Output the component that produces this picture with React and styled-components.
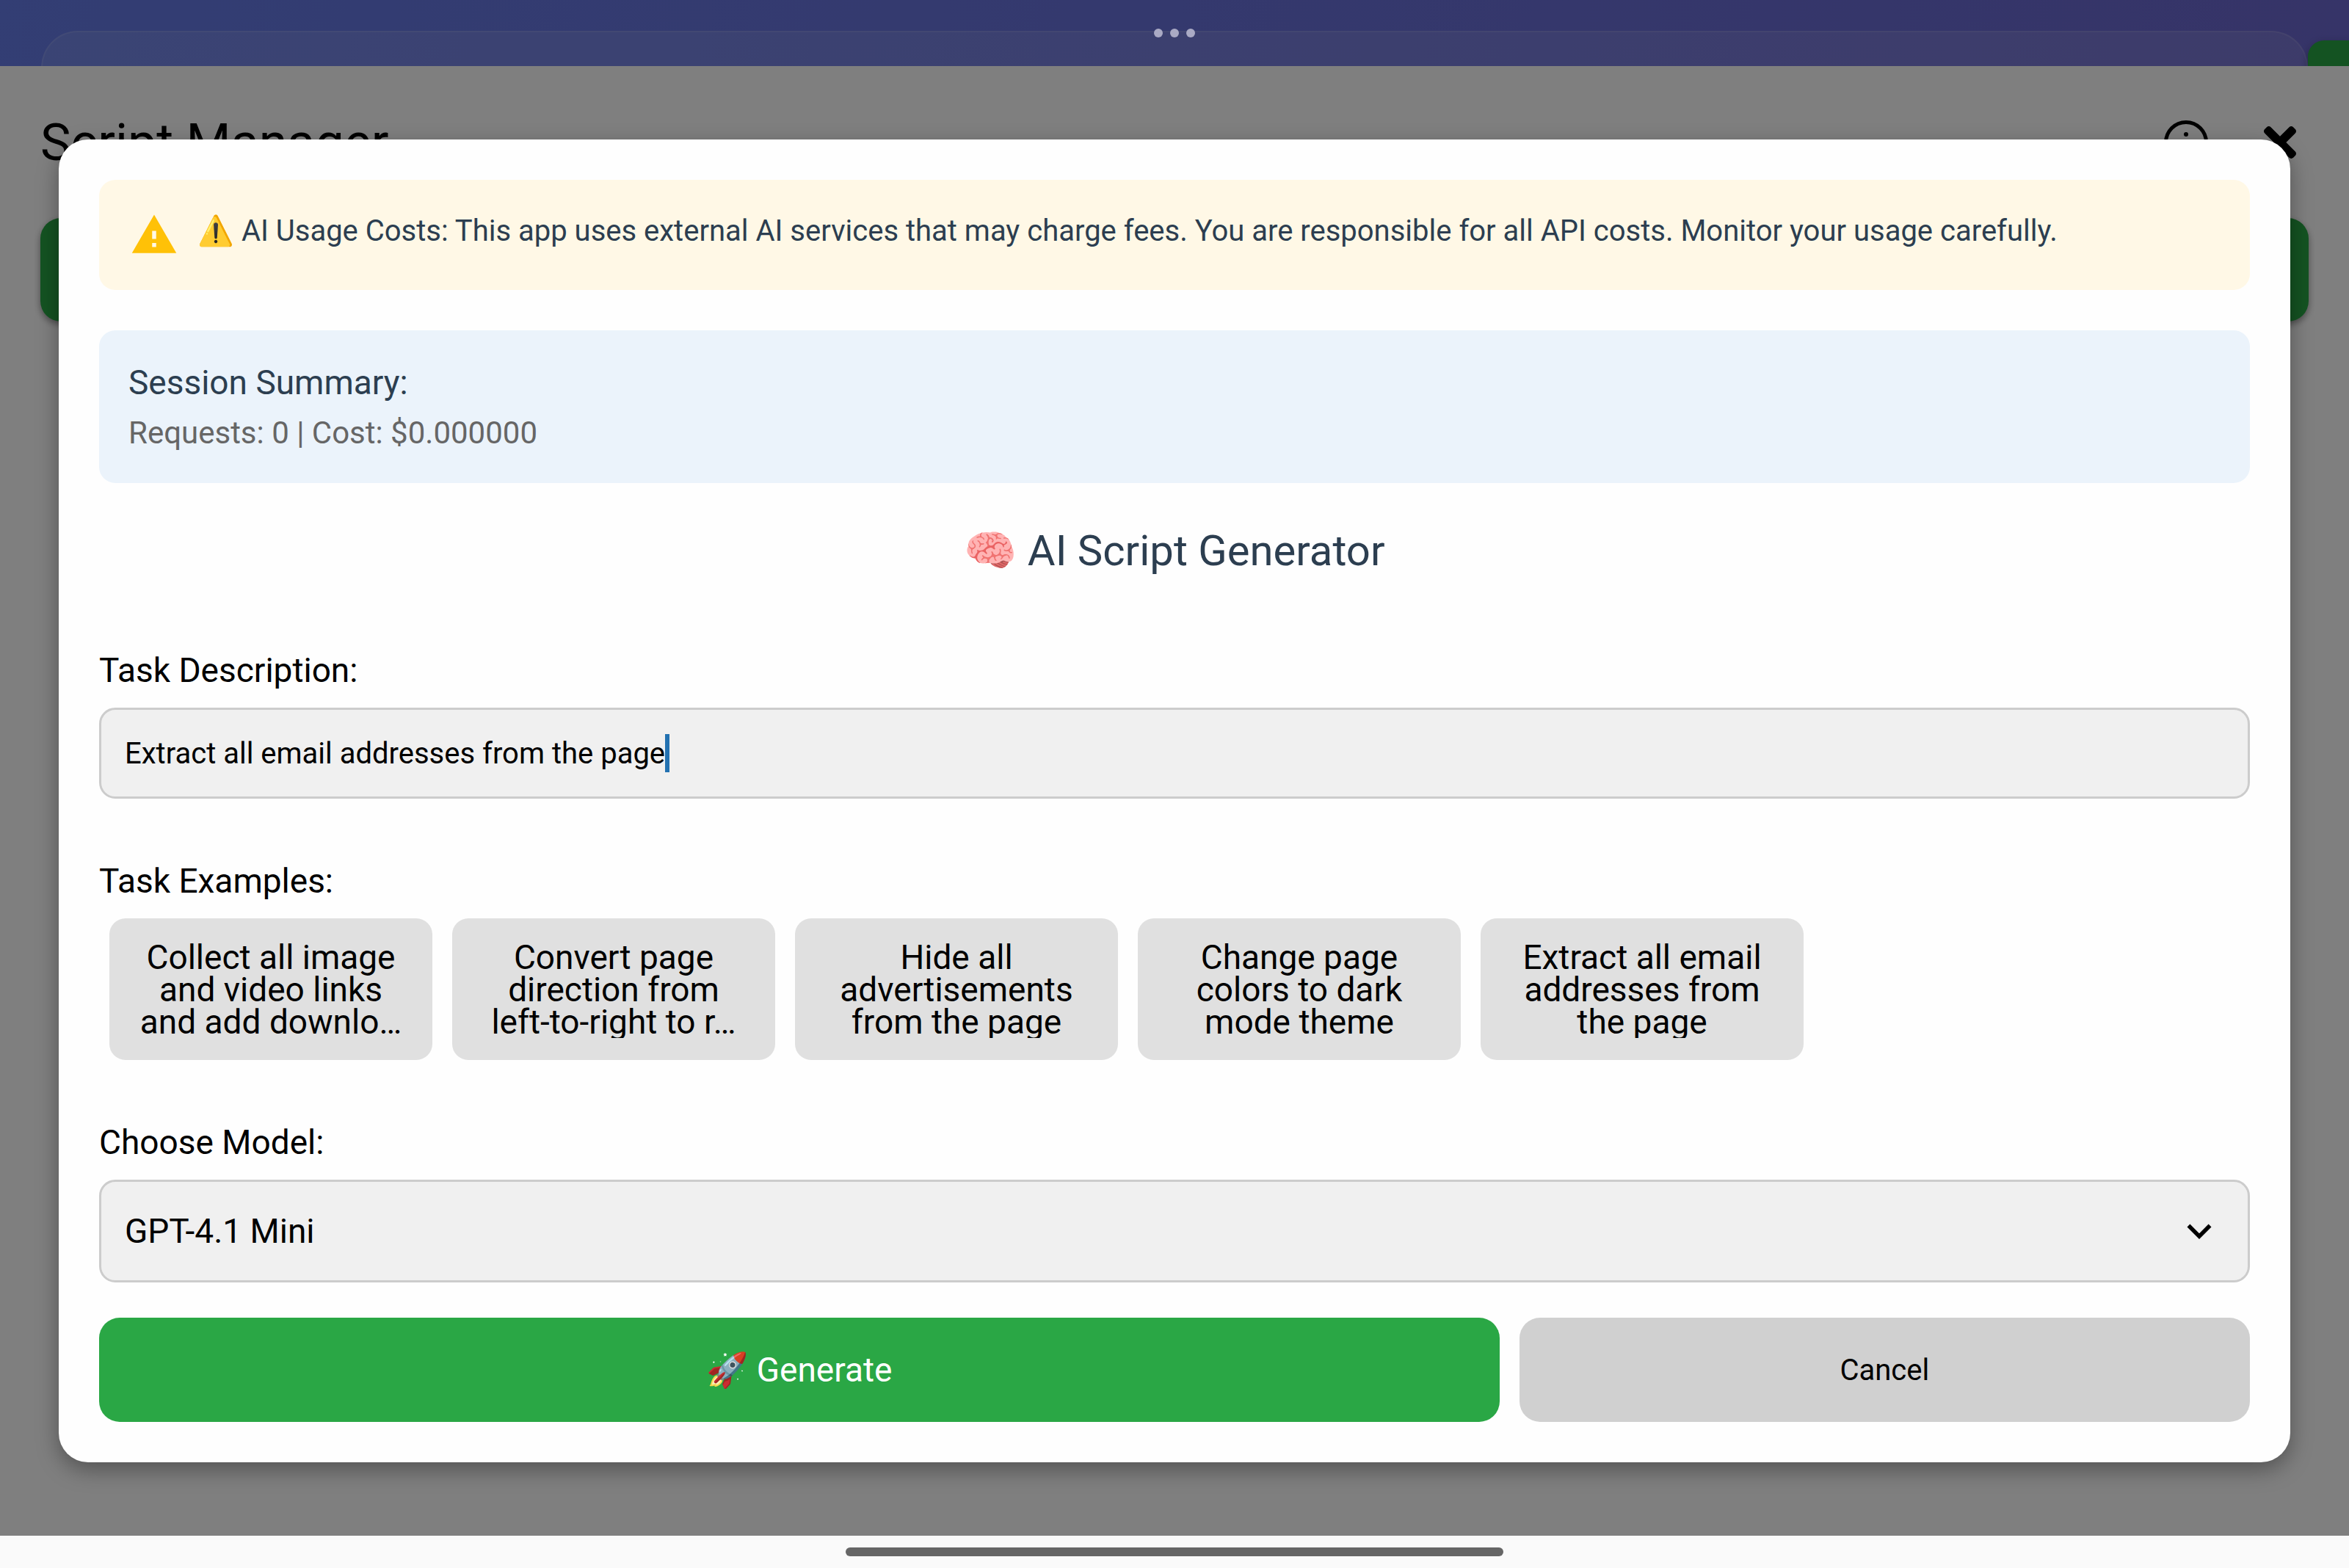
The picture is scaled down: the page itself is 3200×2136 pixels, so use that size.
import React, { useState } from "react";
import styled, { createGlobalStyle } from "styled-components";
import { FaTimes } from "react-icons/fa";

const GlobalStyle = createGlobalStyle`
  *, *::before, *::after { box-sizing: border-box; }
  body { margin: 0; background: #fafafa; font-family: Roboto, "Noto Sans", sans-serif; color: #000; }
  button, input, select { font: inherit; color: inherit; margin: 0; border: 0; outline: 0; }
  h1, h2, p { margin: 0; font-weight: 400; }
`;

const Screen = styled.div`
  display: flex;
  flex-direction: column;
  min-height: 100vh;
`;

const Stage = styled.div`
  position: relative;
  display: flex;
  flex-direction: column;
  flex: 1;
  overflow: hidden;
`;

const TopBar = styled.header`
  display: flex;
  align-items: flex-start;
  height: 90px;
  padding: 42px 0 0 56px;
  overflow: hidden;
  background: linear-gradient(100deg, #667ce8, #6c68d0);
`;

const TopCard = styled.div`
  flex: 1;
  height: 120px;
  border: 2px solid rgba(255, 255, 255, 0.1);
  border-radius: 50px;
  background: rgba(255, 255, 255, 0.1);
`;

const TopAction = styled.div`
  width: 56px;
  height: 120px;
  margin-top: 13px;
  border-radius: 22px 0 0 22px;
  background: #28a745;
  box-shadow: 0 4px 12px rgba(0, 0, 0, 0.3);
`;

const ManagerPage = styled.main`
  display: flex;
  flex-direction: column;
  flex: 1;
  gap: 54px;
  padding: 55px 55px 0;
  background: #fff;
`;

const ManagerHeader = styled.div`
  display: flex;
  align-items: center;
  gap: 54px;
  height: 98px;
  padding-right: 2px;
`;

const ManagerTitle = styled.h1`
  flex: 1;
  font-size: 70px;
  line-height: 80px;
`;

const IconButton = styled.button`
  display: grid;
  place-items: center;
  width: 74px;
  height: 74px;
  padding: 0;
  background: none;
  font-size: 64px;
`;

const NewScriptBar = styled.div`
  height: 141px;
  border-radius: 28px;
  background: #28a745;
  box-shadow: 0 4px 10px rgba(0, 0, 0, 0.4);
`;

const Overlay = styled.div`
  position: absolute;
  inset: 0;
  display: flex;
  align-items: center;
  padding: 90px 80px 0;
  background: rgba(0, 0, 0, 0.5);
`;

const WindowDots = styled.div`
  position: absolute;
  top: 39px;
  left: 0;
  right: 0;
  display: flex;
  justify-content: center;
  gap: 10px;
`;

const Dot = styled.span`
  width: 12px;
  height: 12px;
  border-radius: 50%;
  background: #aaaac4;
`;

const Dialog = styled.section`
  display: flex;
  flex-direction: column;
  flex: 1;
  padding: 55px;
  border-radius: 40px;
  background: #fefefe;
  box-shadow: 0 10px 30px rgba(0, 0, 0, 0.35);
`;

const Notice = styled.div`
  display: flex;
  gap: 26px;
  padding: 42px;
  margin-bottom: 55px;
  border-radius: 22px;
  background: #fff8e6;
  color: #2c3e50;
  font-size: 40px;
  line-height: 56px;
`;

const Summary = styled.div`
  display: flex;
  flex-direction: column;
  gap: 12px;
  padding: 41px 40px;
  border-radius: 22px;
  background: #ebf3fb;
`;

const SummaryTitle = styled.p`
  color: #2c3e50;
  font-size: 46px;
  line-height: 60px;
`;

const SummaryText = styled.p`
  color: #666;
  font-size: 42px;
  line-height: 54px;
`;

const DialogTitle = styled.h2`
  margin: 56px 0 97px;
  color: #2c3e50;
  font-size: 58px;
  line-height: 72px;
  text-align: center;
`;

const Form = styled.form`
  display: flex;
  flex-direction: column;
  gap: 82px;
`;

const Field = styled.div`
  display: flex;
  flex-direction: column;
  gap: 21px;
`;

const Label = styled.label`
  font-size: 46px;
  line-height: 60px;
`;

const TextBox = styled.div`
  display: flex;
  align-items: center;
  height: 124px;
  padding: 0 32px;
  border: 3px solid #ccc;
  border-radius: 22px;
  background: #f0f0f0;
`;

const TextInput = styled.input`
  field-sizing: content;
  padding: 0;
  background: none;
  font-size: 40px;
`;

const Caret = styled.span`
  width: 6px;
  height: 52px;
  background: #2271b1;
`;

const ExampleList = styled.div`
  display: flex;
  gap: 27px;
  padding: 0 14px;
`;

const Example = styled.button`
  width: 440px;
  padding: 31px 28px 30px;
  border-radius: 22px;
  background: #e0e0e0;
`;

const ExampleText = styled.span`
  display: block;
  height: 132px;
  overflow: hidden;
  font-size: 46px;
  line-height: 44px;
  white-space: pre-line;
`;

const SelectBox = styled.div`
  display: grid;
  align-items: center;
  height: 140px;
  border: 3px solid #ccc;
  border-radius: 22px;
  background: #f0f0f0;

  > * { grid-area: 1 / 1; }
  > svg { justify-self: end; margin-right: 33px; pointer-events: none; }
`;

const ModelSelect = styled.select`
  width: 100%;
  height: 100%;
  padding: 0 32px;
  appearance: none;
  background: none;
  font-size: 46px;
`;

const Actions = styled.div`
  display: grid;
  grid-template-columns: 23fr 12fr;
  gap: 27px;
  margin-top: 48px;
`;

const ActionButton = styled.button`
  height: 142px;
  border-radius: 28px;
  background: ${(p) => (p.$primary ? "#2aa745" : "#d0d0d0")};
  color: ${(p) => (p.$primary ? "#fff" : "#000")};
  font-size: ${(p) => (p.$primary ? 46 : 40)}px;
`;

const HomeStrip = styled.footer`
  display: grid;
  place-items: center;
  height: 44px;
  background: #fafafa;
`;

const HomeIndicator = styled.div`
  width: 28vw;
  height: 12px;
  border-radius: 6px;
  background: #666;
`;

const InfoIcon = () => (
  <svg width="60" height="60" viewBox="0 0 60 60" fill="none" stroke="#000" strokeWidth="5">
    <circle cx="30" cy="30" r="27.5" />
    <circle cx="30" cy="19" r="3" fill="#000" stroke="none" />
    <path d="M30 29v16" strokeLinecap="round" />
  </svg>
);

const WarningIcon = () => (
  <svg width="66" height="66" viewBox="0 0 24 24" fill="#ffc107">
    <path d="M1 21h22L12 2 1 21zm12-3h-2v-2h2v2zm0-4h-2v-4h2v4z" />
  </svg>
);

const ChevronIcon = () => (
  <svg width="66" height="66" viewBox="0 0 24 24">
    <path d="M7.41 8.59L12 13.17l4.59-4.58L18 10l-6 6-6-6z" />
  </svg>
);

const EXAMPLES = [
  "Collect all image\nand video links\nand add downlo…",
  "Convert page\ndirection from\nleft-to-right to r…",
  "Hide all\nadvertisements\nfrom the page",
  "Change page\ncolors to dark\nmode theme",
  "Extract all email\naddresses from\nthe page",
];

export default function App() {
  const [task, setTask] = useState("Extract all email addresses from the page");

  return (
    <Screen>
      <GlobalStyle />
      <Stage>
        <TopBar>
          <TopCard />
          <TopAction />
        </TopBar>
        <ManagerPage>
          <ManagerHeader>
            <ManagerTitle>Script Manager</ManagerTitle>
            <IconButton aria-label="Information"><InfoIcon /></IconButton>
            <IconButton aria-label="Close"><FaTimes /></IconButton>
          </ManagerHeader>
          <NewScriptBar />
        </ManagerPage>
        <Overlay>
          <WindowDots><Dot /><Dot /><Dot /></WindowDots>
          <Dialog role="dialog" aria-labelledby="dialog-title">
            <Notice>
              <WarningIcon />
              <p>
                ⚠️ AI Usage Costs: This app uses external AI services that may charge fees. You are
                responsible for all API costs. Monitor your usage carefully.
              </p>
            </Notice>
            <Summary>
              <SummaryTitle>Session Summary:</SummaryTitle>
              <SummaryText>Requests: 0 | Cost: $0.000000</SummaryText>
            </Summary>
            <DialogTitle id="dialog-title">🧠 AI Script Generator</DialogTitle>
            <Form onSubmit={(e) => e.preventDefault()}>
              <Field>
                <Label htmlFor="task">Task Description:</Label>
                <TextBox>
                  <TextInput id="task" value={task} onChange={(e) => setTask(e.target.value)} />
                  <Caret />
                </TextBox>
              </Field>
              <Field>
                <Label as="p" id="examples-label">Task Examples:</Label>
                <ExampleList role="group" aria-labelledby="examples-label">
                  {EXAMPLES.map((text) => (
                    <Example key={text} type="button" onClick={() => setTask(text.replace(/\n/g, " "))}>
                      <ExampleText>{text}</ExampleText>
                    </Example>
                  ))}
                </ExampleList>
              </Field>
              <Field>
                <Label htmlFor="model">Choose Model:</Label>
                <SelectBox>
                  <ModelSelect id="model">
                    <option>GPT-4.1 Mini</option>
                  </ModelSelect>
                  <ChevronIcon />
                </SelectBox>
              </Field>
            </Form>
            <Actions>
              <ActionButton $primary>🚀 Generate</ActionButton>
              <ActionButton>Cancel</ActionButton>
            </Actions>
          </Dialog>
        </Overlay>
      </Stage>
      <HomeStrip>
        <HomeIndicator />
      </HomeStrip>
    </Screen>
  );
}
